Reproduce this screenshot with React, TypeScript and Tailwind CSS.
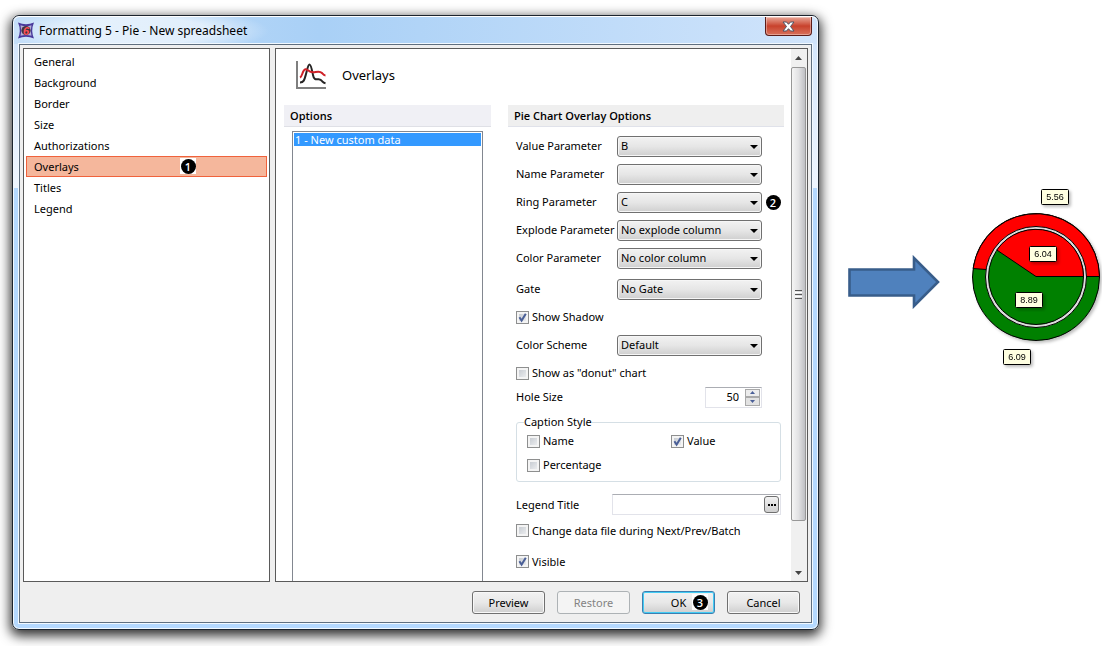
import { useState } from "react";

const SECTIONS = ["General", "Background", "Border", "Size", "Authorizations", "Overlays", "Titles", "Legend"];

type TBadge = {
	num: number;
	className?: string;
};

function Badge({ num, className = "" }: TBadge) {
	return (
		<span className={`flex size-4 shrink-0 items-center justify-center bg-white ${className}`}>
			<span className="flex size-[15px] items-center justify-center rounded-full bg-black font-['Open_Sans',sans-serif] text-[11px] leading-none font-semibold text-white">
				{num}
			</span>
		</span>
	);
}

type TSelect = {
	id: string;
	label: string;
	options: string[];
	badge?: number;
};

function SelectRow({ id, label, options, badge }: TSelect) {
	return (
		<div className="flex h-7 items-center">
			<label htmlFor={id} className="w-[101px] shrink-0 whitespace-nowrap">
				{label}
			</label>
			<div className="relative w-[145px] shrink-0">
				<select
					id={id}
					className="block h-[21px] w-full appearance-none rounded-[3px] border border-[#707070] bg-linear-to-b from-[#f2f2f2] from-0% via-[#e6e6e6] via-50% to-[#cfcfcf] pr-5 pl-[3px] leading-4 inset-shadow-[0_0_0_1px_#f6f6f6]"
				>
					{options.map((option) => (
						<option key={option}>{option}</option>
					))}
				</select>
				<svg viewBox="0 0 8 4" className="pointer-events-none absolute top-[9px] right-1 h-1 w-2">
					<path d="M0 0h8L4 4z" />
				</svg>
			</div>
			{badge && <Badge num={badge} className="ml-[3px]" />}
		</div>
	);
}

type TCheck = {
	id: string;
	label: string;
	checked?: boolean;
	className?: string;
};

function CheckBox({ id, label, checked = false, className = "" }: TCheck) {
	return (
		<div className={`flex items-center gap-[3px] ${className}`}>
			<span className="relative size-[13px] shrink-0">
				<input
					id={id}
					type="checkbox"
					defaultChecked={checked}
					className="peer block size-[13px] appearance-none border border-[#8e8f8f] bg-linear-to-br from-[#bfc4cb] to-[#f4f5f6] inset-shadow-[0_0_0_2px_#f4f4f4]"
				/>
				<svg viewBox="0 0 13 13" className="pointer-events-none absolute inset-0 hidden size-[13px] peer-checked:block">
					<path d="M3.4 6.2l2.2 3.4L9.8 2.8" fill="none" stroke="#4a5f97" strokeWidth="2" />
				</svg>
			</span>
			<label htmlFor={id} className="whitespace-nowrap">
				{label}
			</label>
		</div>
	);
}

const BUTTON =
	"flex h-[23px] w-[73px] items-center justify-center rounded-[3px] border border-[#707070] bg-linear-to-b from-[#f2f2f2] via-[#e8e8e8] to-[#cfcfcf] inset-shadow-[0_0_0_1px_#f8f8f8]";

function AppIcon() {
	return (
		<svg viewBox="0 0 16 17" className="h-[17px] w-4 shrink-0">
			<path d="M0 0.5Q8 4 16 0.5Q12.5 8.5 16 16.5Q8 13 0 16.5Q3.5 8.5 0 0.5z" fill="#4a3a9c" />
			<path d="M2.500 3.200Q8 5 13.500 3.200Q12 8.500 13.500 13.800Q8 12 2.500 13.800Q4 8.500 2.500 3.200z" fill="#b5b0d8" />
			<circle cx="8" cy="8.500" r="4.600" fill="#43343f" />
			<text x="8" y="12.500" textAnchor="middle" fontSize="11" fontWeight="bold" fontStyle="italic" fill="#ff5057" fontFamily="Liberation Sans, sans-serif">
				6
			</text>
		</svg>
	);
}

function OverlayIcon() {
	return (
		<svg viewBox="0 0 31 29" className="h-[29px] w-[31px] shrink-0" fill="none">
			<path d="M1 0v27h29" stroke="#7f7f7f" strokeWidth="2" />
			<path d="M4 21.500c4 0 4.500-3 6-8.500C11.500 8 12 3.500 13.500 3.500S16 9 17 14c.8 4.500 2.500 4.500 5 4.200c3-.4 3.500 1 4.500 2.500c.8 1 1.500 1.300 3 1.600" stroke="#262424" strokeWidth="2" />
			<path d="M4 16.500c2-1 2-4 3.500-6.500c1.200-2 2.500-2.200 4-1c2.500 2 5 2.800 8 2c3-.7 5-.6 6.500 1c1 1.200 1.800 2.400 3.500 2.500" stroke="#cf2128" strokeWidth="2" />
		</svg>
	);
}

function ScrollBar() {
	return (
		<div className="flex w-4 shrink-0 flex-col items-start bg-[#f0f0f0]">
			<div className="flex h-[18px] items-center pl-1">
				<svg viewBox="0 0 7 4" className="h-1 w-[7px]">
					<path d="M3.500 0L7 4H0z" fill="#444" />
				</svg>
			</div>
			<div className="flex w-[15px] flex-1 flex-col items-center justify-center gap-px rounded-[2px] border border-[#979797] bg-linear-to-r from-[#f5f5f5] via-[#e2e2e4] to-[#bfc0c4]">
				<span className="h-px w-[7px] bg-[#555]" />
				<span className="h-px w-[7px] bg-white" />
				<span className="h-px w-[7px] bg-[#555]" />
				<span className="h-px w-[7px] bg-white" />
				<span className="h-px w-[7px] bg-[#555]" />
			</div>
			<div className="flex h-[60px] items-end pb-1.5 pl-1">
				<svg viewBox="0 0 7 4" className="h-1 w-[7px]">
					<path d="M0 0h7L3.500 4z" fill="#444" />
				</svg>
			</div>
		</div>
	);
}

function PieOptions() {
	return (
		<section className="min-w-0 flex-1">
			<h3 className="h-[22px] border-b border-[#e0e2ea] bg-[#efefef] pl-1.5 font-['Open_Sans',sans-serif] leading-[21px] font-semibold">
				Pie Chart Overlay Options
			</h3>
			<div className="flex flex-col pt-[5px] pr-[3px] pb-1 pl-2">
				<SelectRow id="value" label="Value Parameter" options={["B", "C"]} />
				<SelectRow id="name" label="Name Parameter" options={[""]} />
				<SelectRow id="ring" label="Ring Parameter" options={["C", "B"]} badge={2} />
				<SelectRow id="explode" label="Explode Parameter" options={["No explode column"]} />
				<SelectRow id="color" label="Color Parameter" options={["No color column"]} />
				<div className="pt-[3px]">
					<SelectRow id="gate" label="Gate" options={["No Gate"]} />
				</div>
				<CheckBox id="shadow" label="Show Shadow" checked className="h-7" />
				<SelectRow id="scheme" label="Color Scheme" options={["Default"]} />
				<CheckBox id="donut" label={'Show as "donut" chart'} className="h-7" />
				<div className="flex h-5 items-center">
					<label htmlFor="hole" className="w-[189px] shrink-0">
						Hole Size
					</label>
					<div className="flex h-[21px] w-[57px] border border-[#e2e3ea] border-t-[#abadb3]">
						<input id="hole" defaultValue="50" className="w-[36px] pr-[3px] text-right" />
						<div className="flex flex-1 flex-col p-px pl-[3px]">
							<button type="button" aria-label="Increase" className="flex flex-1 items-center justify-center border border-[#a9a9a9] bg-[#ececec]">
								<svg viewBox="0 0 5 3" className="h-[3px] w-[5px]">
									<path d="M2.500 0L5 3H0z" fill="#4a5f97" />
								</svg>
							</button>
							<button type="button" aria-label="Decrease" className="flex flex-1 items-center justify-center border border-[#a9a9a9] bg-[#e2e2e2]">
								<svg viewBox="0 0 5 3" className="h-[3px] w-[5px]">
									<path d="M0 0h5L2.500 3z" fill="#4a5f97" />
								</svg>
							</button>
						</div>
					</div>
				</div>

				<fieldset className="mt-[7px] rounded-[3px] border border-[#d5dfe5] px-2.5 pb-[3px]">
					<legend className="-ml-[3px] h-4 leading-4">Caption Style</legend>
					<div className="grid grid-cols-[144px_1fr]">
						<CheckBox id="capName" label="Name" className="h-[22px]" />
						<CheckBox id="capValue" label="Value" checked className="h-[22px]" />
						<CheckBox id="capPercent" label="Percentage" className="h-[26px]" />
					</div>
				</fieldset>

				<div className="mt-3 flex h-[21px] items-center">
					<label htmlFor="legend" className="w-24 shrink-0">
						Legend Title
					</label>
					<div className="flex h-[21px] min-w-0 flex-1 items-center border border-[#e2e3ea] border-t-[#abadb3] pr-px">
						<input id="legend" className="min-w-0 flex-1" />
						<button
							type="button"
							aria-label="Browse"
							className="flex h-[17px] w-[15px] items-center justify-center rounded-[3px] border border-[#707070] bg-linear-to-b from-[#f2f2f2] to-[#cfcfcf]"
						>
							<svg viewBox="0 0 8 2" className="h-0.5 w-2">
								<path d="M0 0h2v2H0zM3 0h2v2H3zM6 0h2v2H6z" />
							</svg>
						</button>
					</div>
				</div>
				<CheckBox id="change" label="Change data file during Next/Prev/Batch" className="h-[31px]" />
				<CheckBox id="visible" label="Visible" checked className="h-[31px]" />
			</div>
		</section>
	);
}

function FormattingDialog() {
	const [section, setSection] = useState("Overlays");

	return (
		<div
			role="dialog"
			aria-labelledby="dialog-title"
			className="min-w-0 flex-1 rounded-[7px] border border-[#1c242e] bg-[linear-gradient(#cfe3fb_0,#eff6ff_172px,#b5d9ff_172px)] px-1.5 pb-1.5 shadow-[0_4px_12px_2px_rgba(0,0,0,0.8)] inset-shadow-[0_0_0_1px_#f2f9ff]"
		>
			<header className="-mx-[5px] flex h-7 items-start rounded-t-[6px] border-t border-white bg-[radial-gradient(ellipse_130px_24px_at_125px_14px,rgba(255,255,255,0.6)_55%,rgba(255,255,255,0)),linear-gradient(to_right,#c5dff9,#a9d0f6_38%,#d0e4fb)]">
				<div className="flex h-full flex-1 items-center gap-[5px] pl-1">
					<AppIcon />
					<h1 id="dialog-title" className="text-[12px] leading-4">
						Formatting 5 - Pie - New spreadsheet
					</h1>
				</div>
				<button
					type="button"
					aria-label="Close"
					className="mr-[5px] flex h-[19px] w-[47px] items-center justify-center rounded-b-[4px] border border-t-0 border-[#5c1c18] bg-linear-to-b from-[#e7a597] from-0% via-[#c8412c] via-50% to-[#d8705a] inset-shadow-[0_0_0_1px_rgba(255,255,255,0.35)]"
				>
					<svg viewBox="0 0 13 11" className="h-[11px] w-[13px]">
						<path d="M1 1h3.500l2 2.300l2-2.300H12L8.500 5.500L12 10H8.500l-2-2.300l-2 2.300H1l3.500-4.500z" fill="#fff" stroke="#4c5566" />
					</svg>
				</button>
			</header>

			<div className="border border-[#5f6f80] bg-[#efefef] px-[3px] pt-[3px] shadow-[0_0_0_1px_#f2f9ff]">
				<div className="flex gap-[5px]">
					<nav className="flex w-[247px] shrink-0 flex-col border border-[#5a5a5a] bg-white p-0.5">
						{SECTIONS.map((name) => (
							<button
								key={name}
								type="button"
								onClick={() => setSection(name)}
								className={
									name === section
										? "relative flex h-[21px] items-center border border-[#f0623c] bg-[#f5b79c] px-[7px]"
										: "relative flex h-[21px] items-center border border-transparent px-[7px]"
								}
							>
								{name}
								{name === "Overlays" && <Badge num={1} className="absolute top-px left-[153px]" />}
							</button>
						))}
					</nav>

					<main className="flex min-w-0 flex-1 border border-[#5a5a5a] bg-white">
						<div className="flex min-w-0 flex-1 flex-col pr-[7px] pl-2">
							<div className="flex h-14 items-center gap-[15px] pb-1 pl-3">
								<OverlayIcon />
								<h2 className="text-[13px]">{section}</h2>
							</div>
							<div className="flex flex-1 gap-[17px]">
								<section className="flex w-[207px] shrink-0 flex-col">
									<h3 className="h-[22px] border-b border-[#dfe0e6] bg-[#f0f0f5] pl-1.5 font-['Open_Sans',sans-serif] leading-[21px] font-semibold">
										Options
									</h3>
									<ul className="mt-1 mr-2 ml-2 flex-1 border border-b-0 border-[#828790] p-px">
										<li className="h-[13px] bg-[#3399ff] pl-px leading-[13px] text-white">1 - New custom data</li>
									</ul>
								</section>
								<PieOptions />
							</div>
						</div>
						<ScrollBar />
					</main>
				</div>

				<footer className="flex justify-end gap-3 pt-[9px] pr-2 pb-2">
					<button type="button" className={BUTTON}>
						Preview
					</button>
					<button type="button" disabled className="flex h-[23px] w-[73px] items-center justify-center rounded-[3px] border border-[#adb2b5] bg-[#f4f4f4] text-[#838383]">
						Restore
					</button>
					<button
						type="button"
						className="relative flex h-[23px] w-[73px] items-center justify-center rounded-[3px] border border-[#3c7fb1] bg-linear-to-b from-[#f2f2f2] via-[#e8e8e8] to-[#cfcfcf] inset-shadow-[0_0_0_1px_#43ccf4]"
					>
						OK
						<Badge num={3} className="absolute top-[2px] right-[6px]" />
					</button>
					<button type="button" className={BUTTON}>
						Cancel
					</button>
				</footer>
			</div>
		</div>
	);
}

const CAPTIONS = [
	{ x: 69, y: 4, value: "5.56" },
	{ x: 57, y: 61, value: "6.04" },
	{ x: 43, y: 107, value: "8.89" },
	{ x: 31, y: 164, value: "6.09" },
];

function PieChart() {
	return (
		<svg viewBox="0 0 130 193" className="h-[193px] w-[130px] shrink-0" role="img" aria-label="Pie chart with ring">
			<defs>
				<filter id="soft" x="-20%" y="-20%" width="150%" height="150%">
					<feDropShadow dx="2" dy="2" stdDeviation="1.5" floodOpacity="0.25" />
				</filter>
			</defs>
			<g stroke="#000">
				<circle cx="64" cy="92" r="63.500" fill="#008000" filter="url(#soft)" />
				<path d="M64 91.500H127.500A63.500 63.500 0 0 0 1.100 83.500L14 84.500L64 91.500z" fill="#f00" />
				<circle cx="64" cy="92" r="50.500" fill="#dcdcdc" />
				<circle cx="64" cy="92" r="47.500" fill="#008000" />
				<path d="M64 91.500H111.500A47.500 47.500 0 0 0 24.800 65z" fill="#f00" />
			</g>
			{CAPTIONS.map((caption) => (
				<g key={caption.value} filter="url(#soft)">
					<rect x={caption.x + 0.5} y={caption.y + 0.5} width="27" height="15" rx="1" fill="#ffffe1" stroke="#000" />
					<text x={caption.x + 14} y={caption.y + 11} textAnchor="middle" fontSize="9" fontFamily="Liberation Sans, sans-serif">
						{caption.value}
					</text>
				</g>
			))}
		</svg>
	);
}

export default function App() {
	return (
		<div className="flex items-start bg-white pt-[15px] pb-4 pl-3 font-['Noto_Sans','Open_Sans',sans-serif] text-[11px] leading-4 text-black">
			<FormattingDialog />
			<aside className="flex shrink-0 items-center gap-8 pt-[170px] pr-[7px] pl-[29px]">
				<svg viewBox="0 0 92 54" className="h-[54px] w-[92px] shrink-0">
					<path d="M1.500 14.500H66V3L90 27L66 51V40.500H1.500z" fill="#4f81bd" stroke="#385d8a" strokeWidth="2.600" />
				</svg>
				<PieChart />
			</aside>
		</div>
	);
}
